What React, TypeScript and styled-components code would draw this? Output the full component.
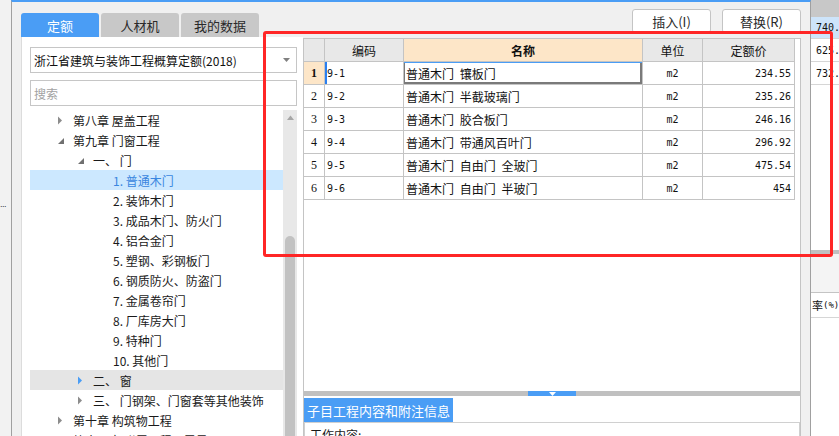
import React from "react";
import styled, { createGlobalStyle } from "styled-components";

const CJK = `"Noto Sans CJK SC", "Microsoft YaHei", sans-serif`;
const MONO = `"DejaVu Sans Mono", "Liberation Mono", "Noto Sans CJK SC", monospace`;
const BLUE = "#4a9df5";

const GlobalStyle = createGlobalStyle`
  html, body { margin: 0; padding: 0; overflow: hidden; background: #f0f0f0; }
  #root { width: 839px; height: 436px; }
  * { box-sizing: border-box; }
`;

const Page = styled.div`
  position: relative;
  width: 839px;
  height: 436px;
  display: flex;
  overflow: hidden;
  font-family: ${CJK};
  color: #1c1c1c;
`;

const LeftStrip = styled.div`
  width: 11px;
  flex: none;
  background: #f2f2f2;
  padding-top: 199px;
  font-family: "Liberation Sans", sans-serif;
  font-size: 9px;
  letter-spacing: -0.5px;
  color: #334;
`;

const Dialog = styled.div`
  width: 800px;
  flex: none;
  display: flex;
  background: #f0f0f0;
  border-left: 1px solid #a0a0a0;
  border-right: 1px solid #a0a0a0;
  border-top: 2px solid ${BLUE};
  padding: 0 9px 0 9px;
`;

const LeftCol = styled.div`
  width: 282px;
  flex: none;
  display: flex;
  flex-direction: column;
  padding-top: 11px;
`;

const TabRow = styled.div`
  display: flex;
  gap: 2px;
  height: 24px;
  flex: none;
`;

const Tab = styled.div<{ $active?: boolean }>`
  width: 78px;
  border-radius: 3px 3px 0 0;
  background: ${(p) => (p.$active ? BLUE : "#c8c8c8")};
  color: ${(p) => (p.$active ? "#fff" : "#2a2a2a")};
  font-size: 13px;
  display: flex;
  align-items: center;
  justify-content: center;
`;

const Panel = styled.div`
  flex: 1;
  min-height: 0;
  background: #fff;
  border-left: 1px solid #dcdcdc;
  padding: 10px 6px 0 8px;
  display: flex;
  flex-direction: column;
`;

const SelectBox = styled.div`
  height: 26px;
  flex: none;
  border: 1px solid #c6c6c6;
  display: flex;
  align-items: center;
  justify-content: space-between;
  padding: 0 6px 0 3px;
  font-size: 12px;
  color: #111;
`;

const SearchBox = styled.div`
  margin-top: 7px;
  height: 26px;
  flex: none;
  border: 1px solid #c6c6c6;
  display: flex;
  align-items: center;
  padding-left: 3px;
  font-size: 12px;
  color: #a2a2a2;
`;

const TreeWrap = styled.div`
  margin-top: 4px;
  flex: 1;
  min-height: 0;
  display: flex;
  overflow: hidden;
`;

const TreeList = styled.div`
  flex: 1;
  display: flex;
  flex-direction: column;
`;

const TreeRow = styled.div<{ $level: number; $selected?: boolean; $hover?: boolean }>`
  height: 20px;
  flex: none;
  display: flex;
  align-items: center;
  padding-left: ${(p) => 25 + p.$level * 20}px;
  background: ${(p) => (p.$selected ? "#cce8ff" : p.$hover ? "#e5e5e5" : "transparent")};
  color: ${(p) => (p.$selected ? "#3a86e0" : "#1a1a1a")};
  font-size: 12px;
  white-space: nowrap;
`;

const ArrowSlot = styled.span`
  width: 18px;
  height: 20px;
  flex: none;
  display: flex;
  align-items: center;
  padding-left: 2px;
`;

const ScrollTrack = styled.div`
  width: 14px;
  flex: none;
  background: #e8e8e8;
  display: flex;
  flex-direction: column;
  align-items: center;
`;

const ScrollArrow = styled.div`
  height: 10px;
  flex: none;
  display: flex;
  align-items: flex-end;
`;

const ScrollThumb = styled.div`
  margin-top: 116px;
  width: 10px;
  flex: 1;
  border-radius: 5px 5px 0 0;
  background: #c2c2c2;
`;

const RightCol = styled.div`
  flex: 1;
  min-width: 0;
  display: flex;
  flex-direction: column;
`;

const Toolbar = styled.div`
  height: 36px;
  flex: none;
  display: flex;
  justify-content: flex-end;
  gap: 11px;
  padding-top: 7px;
`;

const Button = styled.div`
  width: 79px;
  height: 24px;
  border: 1px solid #c4c4c4;
  border-radius: 3px;
  background: #fff;
  font-size: 13px;
  color: #2a2a2a;
  display: flex;
  align-items: center;
  justify-content: center;
`;

const MainArea = styled.div`
  flex: 1;
  min-height: 0;
  display: flex;
  flex-direction: column;
  background: #fff;
  border: 1px solid #c4c4c4;
  border-bottom: none;
`;

const GridZone = styled.div`
  height: 352px;
  flex: none;
`;

const Table = styled.div`
  display: grid;
  grid-template-columns: 21px 79px 239px 60px 92px;
  width: max-content;
`;

type CellKind = "num" | "code" | "name" | "unit" | "price";

const Cell = styled.div<{ $kind: CellKind; $head?: boolean; $hl?: boolean; $focus?: boolean; $cur?: boolean }>`
  height: 23px;
  border-right: 1px solid #c4c4c4;
  border-bottom: 1px solid #c4c4c4;
  display: flex;
  align-items: center;
  white-space: nowrap;
  overflow: hidden;
  background: ${(p) => (p.$hl ? "#fde6c8" : p.$head ? "#e8e8e8" : "#fff")};
  font-weight: ${(p) => (p.$hl && (p.$head || p.$kind === "num") ? "bold" : "normal")};
  justify-content: ${(p) =>
    p.$head || p.$kind === "num" || p.$kind === "unit"
      ? "center"
      : p.$kind === "price"
      ? "flex-end"
      : "flex-start"};
  padding: ${(p) =>
    p.$head ? "0" : p.$kind === "price" ? "0 3px 0 0" : p.$kind === "code" || p.$kind === "name" ? "0 0 0 2px" : "0"};
  font-family: ${(p) =>
    p.$head || p.$kind === "name" ? CJK : p.$kind === "num" ? `"Liberation Serif", serif` : MONO};
  font-size: ${(p) => (p.$head || p.$kind === "name" || p.$kind === "num" ? "12px" : "10px")};
  word-spacing: ${(p) => (p.$kind === "name" ? "3px" : "0")};
  color: #111;
  box-shadow: ${(p) =>
    p.$focus
      ? `inset 0 1px 0 ${BLUE}, inset -2px -2px 0 #7a7a7a, inset 1px 0 0 #7a7a7a`
      : p.$cur
      ? `inset 2px 0 0 #2a7ff0`
      : "none"};
`;

const Splitter = styled.div`
  height: 5px;
  flex: none;
  background: #c0c0c0;
  display: flex;
  justify-content: center;
`;

const SplitHandle = styled.div`
  width: 48px;
  background: ${BLUE};
  display: flex;
  justify-content: center;
  align-items: center;
`;

const InfoTab = styled.div`
  margin-top: 2px;
  width: 149px;
  height: 24px;
  flex: none;
  background: ${BLUE};
  color: #fff;
  font-size: 13px;
  display: flex;
  align-items: center;
  justify-content: center;
`;

const InfoPanel = styled.div`
  height: 80px;
  flex: none;
  border: 1px solid #d0d0d0;
  padding: 3px 5px;
  font-size: 12px;
  color: #1a1a1a;
`;

const BgWin = styled.div`
  flex: 1;
  display: flex;
  flex-direction: column;
  background: #fff;
  font-family: ${MONO};
  font-size: 10px;
  color: #111;
  overflow: hidden;
`;

const BgHeader = styled.div`
  height: 17px;
  flex: none;
  background: #c8c8c8;
`;

const BgRow = styled.div<{ $hl?: boolean; $h?: number }>`
  height: ${(p) => p.$h ?? 23}px;
  flex: none;
  background: ${(p) => (p.$hl ? "#cde4fa" : "#fff")};
  border-bottom: 1px solid #d6d6d6;
  display: flex;
  align-items: center;
  padding-left: 5px;
  white-space: nowrap;
`;

const BgSpacer = styled.div`
  height: 165px;
  flex: none;
`;

const BgBand = styled.div`
  height: 4px;
  flex: none;
  background: #c0c0c0;
`;

const BgBlock = styled.div`
  height: 39px;
  flex: none;
  background: #f4f4f4;
  border-bottom: 1px solid #c4c4c4;
`;

const BgLabel = styled.div`
  height: 25px;
  flex: none;
  display: flex;
  align-items: center;
  padding-left: 1px;
  border-bottom: 1px solid #d6d6d6;
  font-family: ${CJK};
  font-size: 11px;
  white-space: nowrap;
`;

const BgUnit = styled.span`
  font-family: ${MONO};
  font-size: 9px;
`;

const Annotation = styled.div`
  position: absolute;
  left: 263px;
  top: 31px;
  width: 570px;
  height: 226px;
  border: 3px solid #ff2626;
  border-radius: 3px;
  pointer-events: none;
`;

type Node = { level: number; arrow?: "open" | "closed"; text: string; selected?: boolean; hover?: boolean };

const tree: Node[] = [
  { level: 0, arrow: "closed", text: "第八章 屋盖工程" },
  { level: 0, arrow: "open", text: "第九章 门窗工程" },
  { level: 1, arrow: "open", text: "一、 门" },
  { level: 2, text: "1. 普通木门", selected: true },
  { level: 2, text: "2. 装饰木门" },
  { level: 2, text: "3. 成品木门、防火门" },
  { level: 2, text: "4. 铝合金门" },
  { level: 2, text: "5. 塑钢、彩钢板门" },
  { level: 2, text: "6. 钢质防火、防盗门" },
  { level: 2, text: "7. 金属卷帘门" },
  { level: 2, text: "8. 厂库房大门" },
  { level: 2, text: "9. 特种门" },
  { level: 2, text: "10. 其他门" },
  { level: 1, arrow: "closed", text: "二、 窗", hover: true },
  { level: 1, arrow: "closed", text: "三、 门钢架、门窗套等其他装饰" },
  { level: 0, arrow: "closed", text: "第十章 构筑物工程" },
  { level: 0, arrow: "closed", text: "第十一章 附属工程及零星项目" },
];

const rows = [
  ["9-1", "普通木门 镶板门", "m2", "234.55"],
  ["9-2", "普通木门 半截玻璃门", "m2", "235.26"],
  ["9-3", "普通木门 胶合板门", "m2", "246.16"],
  ["9-4", "普通木门 带通风百叶门", "m2", "296.92"],
  ["9-5", "普通木门 自由门 全玻门", "m2", "475.54"],
  ["9-6", "普通木门 自由门 半玻门", "m2", "454"],
];

const TreeArrow: React.FC<{ kind?: "open" | "closed"; hover?: boolean }> = ({ kind, hover }) => {
  if (!kind) return <ArrowSlot />;
  if (kind === "open")
    return (
      <ArrowSlot>
        <svg width="8" height="8" viewBox="0 0 8 8" style={{ marginTop: 2 }}>
          <path d="M7 1 L7 7 L1 7 Z" fill="#707070" />
        </svg>
      </ArrowSlot>
    );
  return (
    <ArrowSlot>
      <svg width="6" height="9" viewBox="0 0 6 9">
        <path d="M1 0.5 L5 4.5 L1 8.5 Z" fill={hover ? BLUE : "#8c8c8c"} />
      </svg>
    </ArrowSlot>
  );
};

export default function App() {
  return (
    <>
      <GlobalStyle />
      <Page>
        <LeftStrip>...</LeftStrip>
        <Dialog>
          <LeftCol>
            <TabRow>
              <Tab $active>定额</Tab>
              <Tab>人材机</Tab>
              <Tab>我的数据</Tab>
            </TabRow>
            <Panel>
              <SelectBox>
                <span>浙江省建筑与装饰工程概算定额(2018)</span>
                <svg width="7" height="4" viewBox="0 0 7 4">
                  <path d="M0 0 L7 0 L3.5 4 Z" fill="#808080" />
                </svg>
              </SelectBox>
              <SearchBox>搜索</SearchBox>
              <TreeWrap>
                <TreeList>
                  {tree.map((n, i) => (
                    <TreeRow key={i} $level={n.level} $selected={n.selected} $hover={n.hover}>
                      <TreeArrow kind={n.arrow} hover={n.hover} />
                      <span>{n.text}</span>
                    </TreeRow>
                  ))}
                </TreeList>
                <ScrollTrack>
                  <ScrollArrow>
                    <svg width="7" height="5" viewBox="0 0 7 5">
                      <path d="M0 5 L3.5 0.5 L7 5 Z" fill="#a6a6a6" />
                    </svg>
                  </ScrollArrow>
                  <ScrollThumb />
                </ScrollTrack>
              </TreeWrap>
            </Panel>
          </LeftCol>
          <RightCol>
            <Toolbar>
              <Button>插入(I)</Button>
              <Button>替换(R)</Button>
            </Toolbar>
            <MainArea>
              <GridZone>
                <Table>
                  <Cell $kind="num" $head />
                  <Cell $kind="code" $head>编码</Cell>
                  <Cell $kind="name" $head $hl>名称</Cell>
                  <Cell $kind="unit" $head>单位</Cell>
                  <Cell $kind="price" $head>定额价</Cell>
                  {rows.map((r, i) => (
                    <React.Fragment key={i}>
                      <Cell $kind="num" $hl={i === 0}>{i + 1}</Cell>
                      <Cell $kind="code" $cur={i === 0}>{r[0]}</Cell>
                      <Cell $kind="name" $focus={i === 0}>{r[1]}</Cell>
                      <Cell $kind="unit">{r[2]}</Cell>
                      <Cell $kind="price">{r[3]}</Cell>
                    </React.Fragment>
                  ))}
                </Table>
              </GridZone>
              <Splitter>
                <SplitHandle>
                  <svg width="7" height="4" viewBox="0 0 7 4">
                    <path d="M0 0 L7 0 L3.5 4 Z" fill="#fff" />
                  </svg>
                </SplitHandle>
              </Splitter>
              <InfoTab>子目工程内容和附注信息</InfoTab>
              <InfoPanel>工作内容:</InfoPanel>
            </MainArea>
          </RightCol>
        </Dialog>
        <BgWin>
          <BgHeader />
          <BgRow $hl $h={22}>740.</BgRow>
          <BgRow>625.</BgRow>
          <BgRow>732.</BgRow>
          <BgSpacer />
          <BgBand />
          <BgBlock />
          <BgLabel>
            率<BgUnit>(%)</BgUnit>
          </BgLabel>
        </BgWin>
        <Annotation />
      </Page>
    </>
  );
}
